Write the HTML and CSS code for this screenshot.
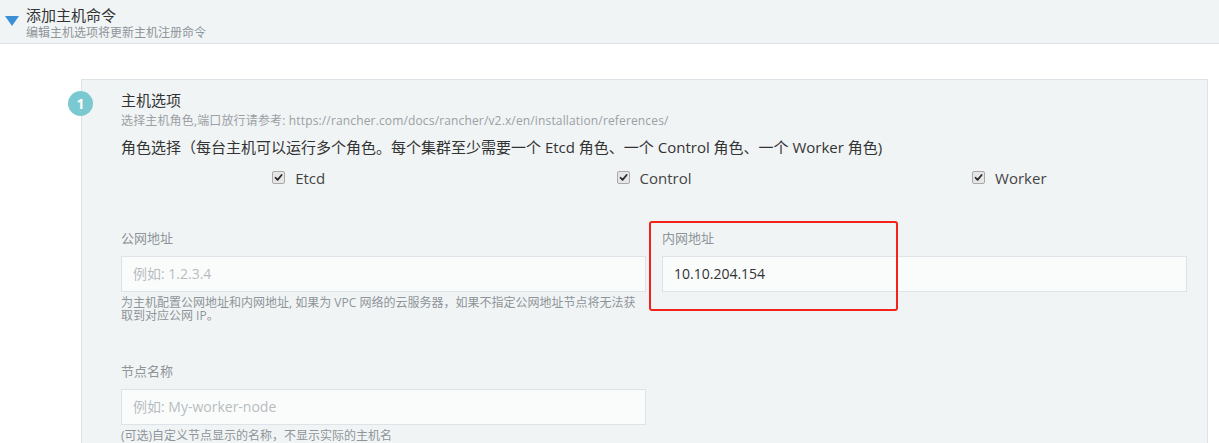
FILE: index.html
```html
<!DOCTYPE html>
<html lang="zh-CN">
<head>
<meta charset="utf-8">
<title>添加主机命令</title>
<link rel="stylesheet" href="styles.css">
</head>
<body>
<div class="accordion-head">
  <span class="caret"></span>
  <div class="head-text">
    <div class="head-title">添加主机命令</div>
    <div class="head-sub">编辑主机选项将更新主机注册命令</div>
  </div>
</div>

<div class="page">
  <div class="step-box">
    <span class="step-num">1</span>
    <div class="step-title">主机选项</div>
    <div class="step-desc">选择主机角色,端口放行请参考: https://rancher.com/docs/rancher/v2.x/en/installation/references/</div>
    <div class="roles-title">角色选择（每台主机可以运行多个角色。每个集群至少需要一个 Etcd 角色、一个 Control 角色、一个 Worker 角色)</div>
    <div class="roles">
      <label class="role"><span class="cb"><svg viewBox="0 0 13 13" width="13" height="13"><path d="M3 6.8 L5.4 9.3 L10.2 3.6" fill="none" stroke="#2b2b2b" stroke-width="2.1" stroke-linecap="round" stroke-linejoin="round"/></svg></span>Etcd</label>
      <label class="role"><span class="cb"><svg viewBox="0 0 13 13" width="13" height="13"><path d="M3 6.8 L5.4 9.3 L10.2 3.6" fill="none" stroke="#2b2b2b" stroke-width="2.1" stroke-linecap="round" stroke-linejoin="round"/></svg></span>Control</label>
      <label class="role"><span class="cb"><svg viewBox="0 0 13 13" width="13" height="13"><path d="M3 6.8 L5.4 9.3 L10.2 3.6" fill="none" stroke="#2b2b2b" stroke-width="2.1" stroke-linecap="round" stroke-linejoin="round"/></svg></span>Worker</label>
    </div>

    <div class="fields">
      <div class="field">
        <div class="field-label">公网地址</div>
        <div class="input placeholder">例如: 1.2.3.4</div>
        <div class="help">为主机配置公网地址和内网地址, 如果为 VPC 网络的云服务器，如果不指定公网地址节点将无法获取到对应公网 IP。</div>
      </div>
      <div class="field">
        <div class="field-label">内网地址</div>
        <div class="input">10.10.204.154</div>
      </div>
      <span class="highlight"></span>
    </div>

    <div class="fields second">
      <div class="field">
        <div class="field-label">节点名称</div>
        <div class="input placeholder">例如: My-worker-node</div>
        <div class="help">(可选)自定义节点显示的名称，不显示实际的主机名</div>
      </div>
    </div>
  </div>
</div>
</body>
</html>
```

FILE: styles.css
```css
* { box-sizing: border-box; }
html, body { margin: 0; padding: 0; }
body {
  font-family: "Open Sans", "Noto Sans CJK SC", sans-serif;
  color: #3a3a3a;
  background: #fff;
  height: 443px;
  overflow: hidden;
}

.accordion-head {
  height: 44px;
  background: #f1f4f5;
  border-bottom: 1px solid #dde3e6;
  display: flex;
  align-items: flex-start;
  padding: 5px 0 0 5px;
}
.caret {
  width: 0; height: 0;
  border-left: 7px solid transparent;
  border-right: 7px solid transparent;
  border-top: 10px solid #3a8fd7;
  margin-top: 11px;
  margin-right: 7px;
}
.head-title { font-size: 15px; line-height: 20px; color: #333; }
.head-sub { font-size: 12px; line-height: 15px; color: #8e9599; }

.page { padding: 35px 11px 0 81px; }

.step-box {
  position: relative;
  background: #f1f4f5;
  border: 1px solid #dde3e6;
  border-bottom: none;
  padding: 10px 20px 40px 39px;
}
.step-num {
  position: absolute;
  left: -14px;
  top: 11px;
  width: 25px;
  height: 25px;
  border-radius: 50%;
  background: #7ac9d0;
  color: #fff;
  font-size: 14px;
  font-weight: bold;
  line-height: 25px;
  text-align: center;
}
.step-title { font-size: 15px; line-height: 20px; color: #333; }
.step-desc { font-size: 12px; line-height: 16px; color: #9aa0a4; margin-top: 3px; letter-spacing: 0.15px; }
.roles-title { font-size: 15px; line-height: 21px; color: #333; margin-top: 8px; }

.roles {
  display: grid;
  grid-template-columns: 1fr 1fr 1fr;
  margin-top: 9px;
}
.role {
  display: flex;
  justify-content: center;
  align-items: center;
  font-size: 15px;
  line-height: 22px;
  color: #444;
}
.cb {
  width: 13px; height: 13px;
  border: 1px solid #a9a9a9;
  border-radius: 2px;
  background: #e6e6e6;
  margin-right: 10px;
  display: flex;
  align-items: center;
  justify-content: center;
  margin-top: -2px;
}
.cb svg { display: block; }

.fields {
  position: relative;
  display: grid;
  grid-template-columns: 1fr 1fr;
  column-gap: 16px;
  margin-top: 40px;
}
.fields.second { margin-top: 40px; }
.field-label { font-size: 13px; line-height: 18px; color: #8e9599; }
.input {
  margin-top: 9px;
  height: 36px;
  background: #fafcfc;
  border: 1px solid #dde3e6;
  padding: 0 11px;
  font-size: 14px;
  line-height: 34px;
  color: #333;
}
.input.placeholder { color: #b7bcbf; }
.help {
  font-size: 12px;
  line-height: 12.5px;
  color: #8e9599;
  margin-top: 5px;
  padding-right: 0;
}
.highlight {
  position: absolute;
  left: 528px;
  top: -8px;
  width: 249px;
  height: 90px;
  border: 2px solid #f5221c;
  border-radius: 3px;
  pointer-events: none;
}
```
